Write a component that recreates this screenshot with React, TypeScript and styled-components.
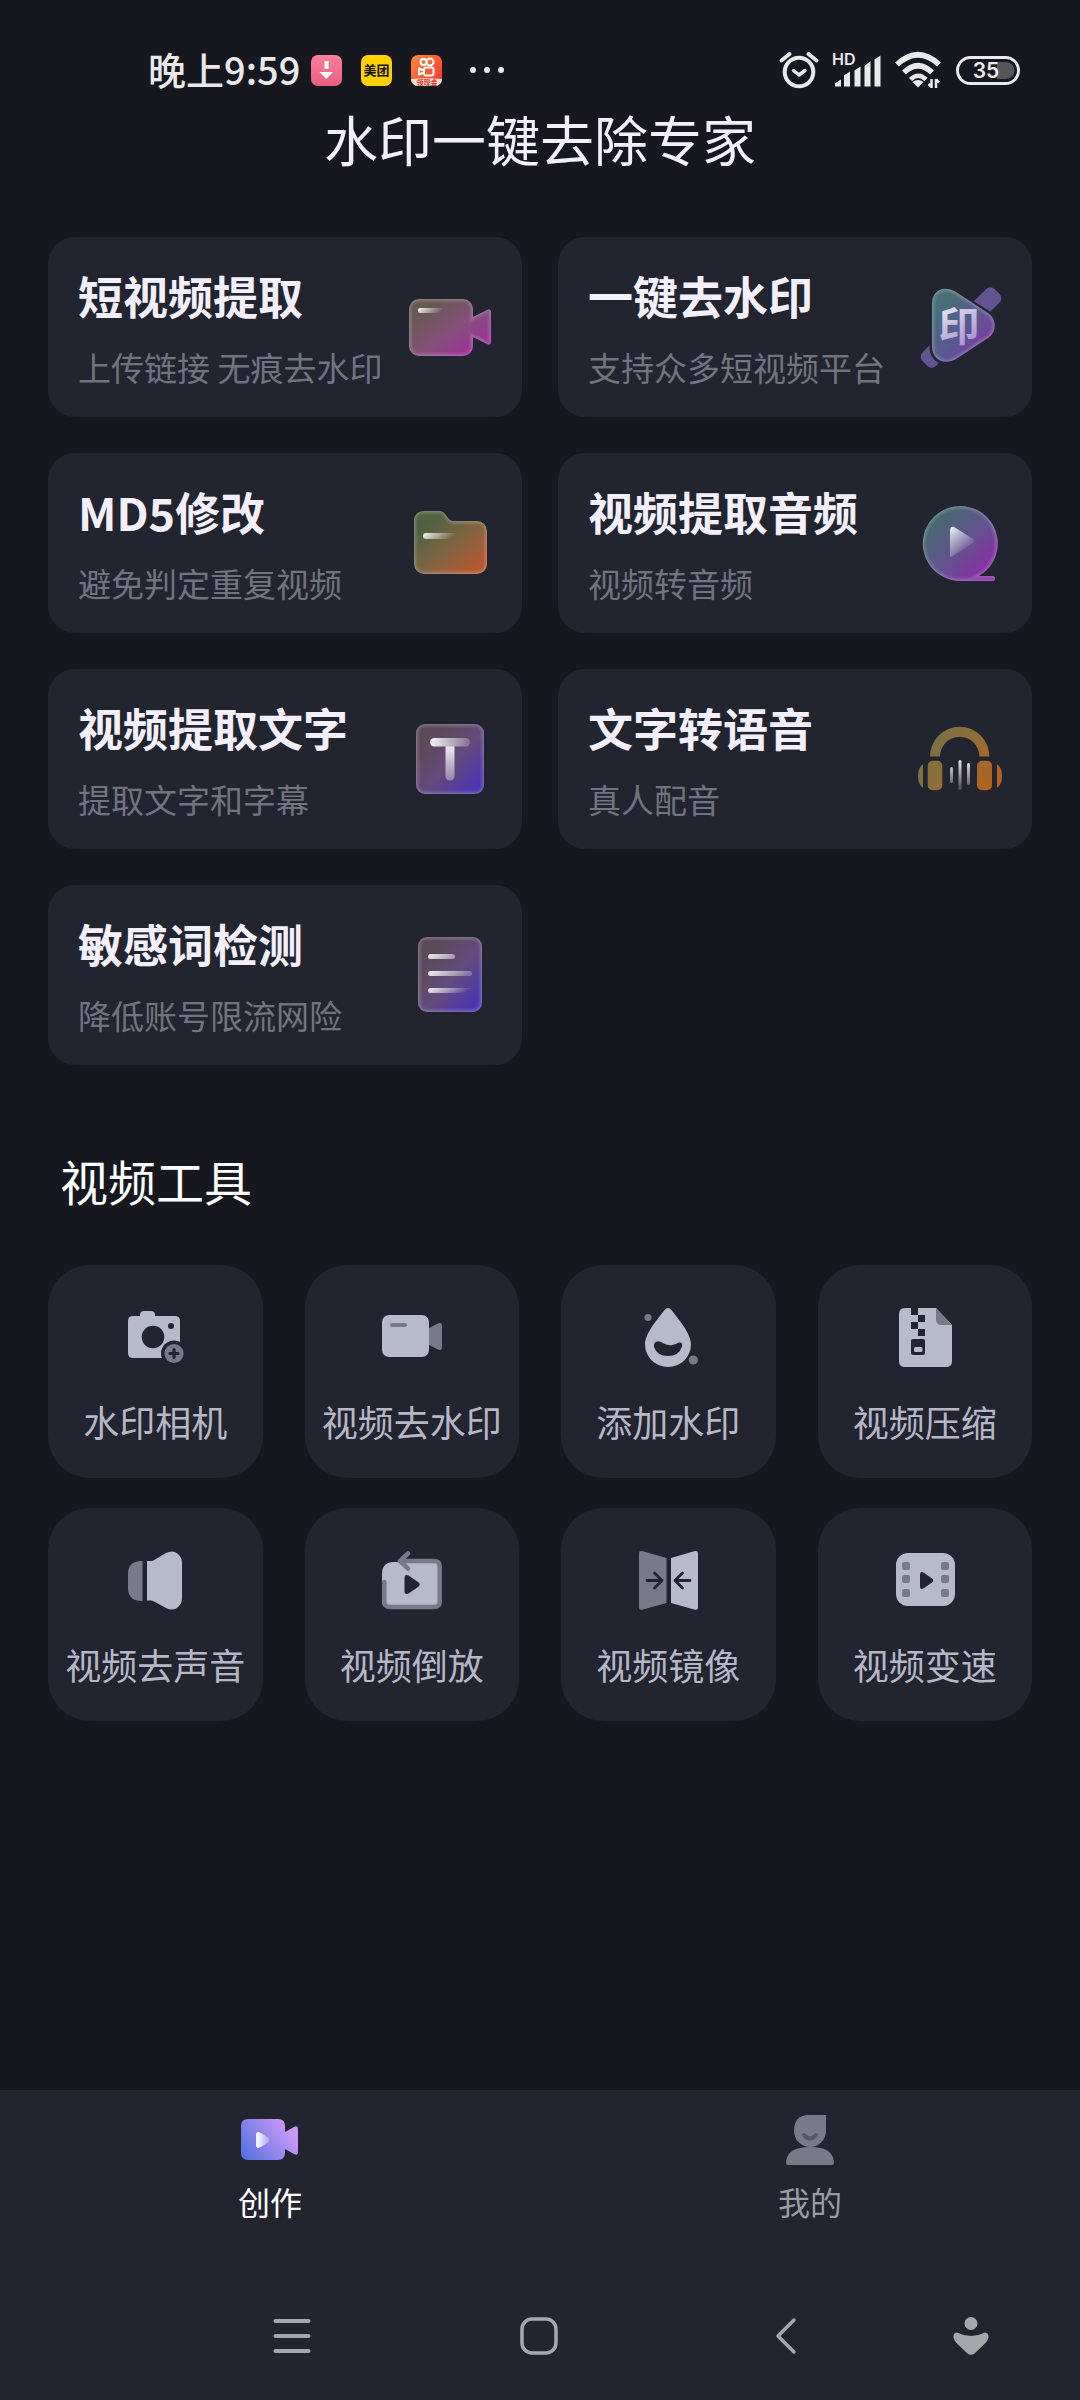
import React from "react";
import styled, { createGlobalStyle } from "styled-components";

const color = {
  page: "#17181f",
  panel: "#222430",
  heading: "#f3effb",
  subtle: "#71747f",
  label: "#b5b7c7",
  light: "#b6bac9",
  mid: "#787a88",
  status: "#e9e9ec",
  system: "#a6a7ad",
};

const GlobalStyle = createGlobalStyle`
  * { box-sizing: border-box; }
  body {
    margin: 0;
    background: ${color.page};
    font-family: "Noto Sans CJK SC", "Noto Sans", sans-serif;
  }
  button { border: 0; padding: 0; margin: 0; background: none; font: inherit; color: inherit; cursor: pointer; }
  h1, h2, h3, p { margin: 0; }
  svg { display: block; flex: none; overflow: visible; }
`;

const Page = styled.div`
  min-height: 100vh;
  display: flex;
  flex-direction: column;
  background: ${color.page};
`;

const StatusBar = styled.header`
  display: flex;
  justify-content: space-between;
  align-items: center;
  padding: 44px 60px 0 148px;
  height: 96px;
  color: ${color.status};
`;

const StatusGroup = styled.div<{ $gap: number }>`
  display: flex;
  align-items: center;
  gap: ${(p) => p.$gap}px;
`;

const Notifications = styled.div`
  display: flex;
  align-items: center;
  gap: 19px;
  padding-right: 16px;
`;

const Clock = styled.time`
  padding-bottom: 2px;
  font-size: 38px;
  line-height: 48px;
  font-weight: 500;
`;

const PageTitle = styled.h1`
  font-size: 54px;
  line-height: 86px;
  font-weight: 400;
  text-align: center;
  color: ${color.heading};
`;

const Main = styled.main`
  flex: 1;
  padding: 55px 48px 48px;
`;

const FeatureGrid = styled.section`
  display: grid;
  grid-template-columns: 1fr 1fr;
  gap: 36px;
`;

const FeatureCard = styled.button`
  display: flex;
  align-items: center;
  justify-content: space-between;
  height: 180px;
  padding: 0 27px 0 30px;
  border-radius: 27px;
  background: ${color.panel};
  text-align: left;
`;

const FeatureText = styled.span`
  display: flex;
  flex-direction: column;
  gap: 15px;
`;

const FeatureTitle = styled.span`
  font-size: 45px;
  line-height: 64px;
  font-weight: 700;
  color: ${color.heading};
`;

const FeatureHint = styled.span`
  font-size: 33px;
  line-height: 48px;
  white-space: nowrap;
  color: ${color.subtle};
`;

const SectionTitle = styled.h2`
  margin: 81px 0 51px;
  padding-left: 12px;
  font-size: 48px;
  line-height: 68px;
  font-weight: 400;
  color: #fff;
`;

const ToolGrid = styled.section`
  display: grid;
  grid-template-columns: repeat(4, 1fr);
  gap: 30px 42px;
`;

const ToolCard = styled.button`
  display: flex;
  flex-direction: column;
  align-items: center;
  gap: 29px;
  padding: 43px 0 33px;
  border-radius: 42px;
  background: ${color.panel};
`;

const ToolLabel = styled.span`
  font-size: 36px;
  line-height: 48px;
  white-space: nowrap;
  color: ${color.label};
`;

const Bottom = styled.footer`
  background: ${color.panel};
`;

const TabBar = styled.nav`
  display: grid;
  grid-template-columns: 1fr 1fr;
`;

const Tab = styled.button<{ $active?: boolean }>`
  display: flex;
  flex-direction: column;
  align-items: center;
  gap: 11px;
  padding: 20px 0 51px;
  font-size: 32px;
  line-height: 40px;
  color: ${(p) => (p.$active ? "#ffffff" : "#9a9ba3")};
`;

const SystemBar = styled.div`
  display: grid;
  grid-template-columns: 2fr 2fr 2fr 1fr;
  padding: 0 47px 0 169px;
  height: 128px;
`;

const SystemButton = styled.button`
  display: flex;
  align-items: center;
  justify-content: center;
`;

/* ---------- status bar drawings ---------- */

const DownloadBadge = () => (
  <svg width="31" height="31" viewBox="0 0 31 31" aria-hidden="true">
    <defs>
      <linearGradient id="dl" x1="0" y1="0" x2="0" y2="1">
        <stop offset="0" stopColor="#fb7f9c" />
        <stop offset="1" stopColor="#e85f80" />
      </linearGradient>
    </defs>
    <rect width="31" height="31" rx="7" fill="url(#dl)" />
    <path d="M13.5 6h4v8h-4zM8.500 17h13.500l-6.700 7z" fill="#fff" />
  </svg>
);

const MeituanBadge = () => (
  <svg width="31" height="31" viewBox="0 0 31 31" aria-hidden="true">
    <rect width="31" height="31" rx="7" fill="#ffd100" />
    <text x="15.500" y="20" fontSize="13" fontWeight="700" textAnchor="middle" fill="#17130a">美团</text>
  </svg>
);

const KuaishouBadge = () => (
  <svg width="31" height="31" viewBox="0 0 31 31" aria-hidden="true">
    <defs>
      <linearGradient id="ks" x1="0" y1="0" x2="1" y2="1">
        <stop offset="0" stopColor="#ff8a3a" />
        <stop offset="1" stopColor="#ff3030" />
      </linearGradient>
      <clipPath id="ksclip"><rect width="31" height="31" rx="7" /></clipPath>
    </defs>
    <g clipPath="url(#ksclip)">
      <rect width="31" height="31" fill="url(#ks)" />
      <g fill="none" stroke="#fff" strokeWidth="2">
        <circle cx="12.500" cy="7" r="3" />
        <circle cx="19" cy="7" r="3.500" />
        <rect x="13" y="12.500" width="9.500" height="8" rx="2" />
        <path d="M13 15.500l-5-2v6l5-2z" />
      </g>
      <path d="M0 24q15-1.500 31 0v7H0z" fill="#f6e3cf" />
      <text x="16" y="30" fontSize="7" fontWeight="700" textAnchor="middle" fill="#d8332c">领现金</text>
    </g>
  </svg>
);

const MoreDots = () => (
  <svg width="36" height="8" viewBox="0 0 36 8" aria-hidden="true" fill={color.status}>
    <circle cx="4" cy="4" r="3" />
    <circle cx="18" cy="4" r="3" />
    <circle cx="32" cy="4" r="3" />
  </svg>
);

const AlarmIcon = () => (
  <svg width="40" height="38" viewBox="0 0 40 38" aria-label="闹钟" fill="none" stroke={color.status} strokeLinecap="round" strokeLinejoin="round">
    <circle cx="20" cy="21" r="14.300" strokeWidth="4" />
    <path d="M14.500 19.500l5.500 4.500 6-4.500" strokeWidth="3.500" />
    <path d="M2.500 9.500l8-6.500M37.500 9.500l-8-6.500" strokeWidth="4" />
  </svg>
);

const SignalIcon = () => (
  <svg width="50" height="44" viewBox="0 -4 50 44" aria-label="信号" fill={color.status}>
    <text x="0" y="13" fontSize="16" fontWeight="600" fontFamily="Inter, sans-serif" fill={color.status}>HD</text>
    <path d="M3 34.500v-3q4-3 6-4v7q0 0-1 0H3zM12 23.500l6-4v15h-6zM22.500 18.500l6-4v20h-6zM32.500 14l6-5v25.500h-6zM42.500 7.500l6-4v31h-6z" />
  </svg>
);

const WifiIcon = () => (
  <svg width="48" height="38" viewBox="0 0 48 38" aria-label="无线网络" fill="none" stroke={color.status} strokeWidth="5.500">
    <path d="M2 13.500Q23 -6 44 13.500" />
    <path d="M9 21.500Q23 8 37 21.500" />
    <path d="M15.500 28.500Q23 21 31 28.500" strokeWidth="4.500" />
    <path d="M17.500 31q5.500-4 11 0L23 36.500z" fill={color.status} stroke="none" />
    <path d="M36.500 28v9M33.500 33l3 3M41 37v-9M44 31.500l-3-3" strokeWidth="2.500" />
  </svg>
);

const BatteryIcon = () => (
  <svg width="64" height="29" viewBox="0 0 64 29" aria-label="电量 35">
    <rect x="1.500" y="1.500" width="61" height="26" rx="13" fill="none" stroke={color.status} strokeWidth="3" />
    <path d="M41 6h9a8.500 8.500 0 0 1 0 17h-9z" fill="#55555c" />
    <text x="30" y="22" fontSize="21" fontWeight="600" fontFamily="Inter, sans-serif" textAnchor="middle" fill={color.status}>35</text>
  </svg>
);

/* ---------- feature drawings, 90 x 90 ---------- */

type GradProps = { id: string; from: string; via?: string; to: string };

const Grad = ({ id, from, via, to }: GradProps) => (
  <linearGradient id={id} x1="0.05" y1="0.05" x2="0.95" y2="0.95">
    <stop offset="0.150" stopColor={from} />
    {via && <stop offset="0.550" stopColor={via} />}
    <stop offset="0.920" stopColor={to} />
  </linearGradient>
);

const Shine = ({ id, end = 0 }: { id: string; end?: number }) => (
  <linearGradient id={id} x1="0" y1="0" x2="1" y2="0.2">
    <stop offset="0.050" stopColor="#fff" stopOpacity="0.900" />
    <stop offset="1" stopColor="#fff" stopOpacity={end} />
  </linearGradient>
);

/* Fills a glass shape and lays a soft bright rim just inside its edge. */
const Glass = ({ id, d }: { id: string; d: string }) => (
  <>
    <clipPath id={`${id}-clip`}><path d={d} /></clipPath>
    <path d={d} fill={`url(#${id})`} />
    <g clipPath={`url(#${id}-clip)`} fill="none" stroke="#fff">
      <path d={d} strokeOpacity="0.050" strokeWidth="8" />
      <path d={d} strokeOpacity="0.080" strokeWidth="5" />
      <path d={d} strokeOpacity="0.100" strokeWidth="2.500" />
    </g>
  </>
);

const Art = ({ children }: { children: React.ReactNode }) => (
  <svg width="90" height="90" viewBox="0 0 90 90" aria-hidden="true">{children}</svg>
);

const CameraArt = () => (
  <Art>
    <defs>
      <Grad id="cam" from="#675853" via="#84507a" to="#9f2c9a" />
      <Shine id="camS" />
    </defs>
    <Glass id="cam" d="M14 17H58a10 10 0 0 1 10 10V35L82 28Q86 26 86 30V60Q86 64 82 62L68 55V64a10 10 0 0 1-10 10H14a10 10 0 0 1-10-10V27a10 10 0 0 1 10-10z" />
    <rect x="13" y="26" width="26" height="5" rx="2" fill="url(#camS)" />
  </Art>
);

const StampArt = () => (
  <Art>
    <defs>
      <Grad id="stamp" from="#467076" via="#5a5791" to="#8434a5" />
      <linearGradient id="stampT" x1="0" y1="0" x2="0.400" y2="1">
        <stop offset="0.200" stopColor="#e6e9f2" />
        <stop offset="1" stopColor="#a98fce" />
      </linearGradient>
    </defs>
    <rect x="-5" y="36" width="102" height="19" rx="6" transform="rotate(-45 46 45.500)" fill="#625491" />
    <path d="M17 22C17 7 30 3 41 11L73 31C83 38 83 50 73 57L41 77C29 85 17 77 17 65z" fill={color.panel} stroke={color.panel} strokeWidth="5" />
    <Glass id="stamp" d="M17 22C17 8 29 3 41 10L73 31C82 37 82 50 73 56L41 77C29 84 17 77 17 65z" />
    <text x="44" y="59" fontSize="41" fontWeight="700" textAnchor="middle" fill="url(#stampT)">印</text>
  </Art>
);

const FolderArt = () => (
  <Art>
    <defs>
      <Grad id="fold" from="#4f6141" via="#806542" to="#b45830" />
      <Shine id="foldS" />
    </defs>
    <Glass id="fold" d="M18 13H34Q38 13 40 16L44 21Q45.500 23 48 23H72a10 10 0 0 1 10 10V66a10 10 0 0 1-10 10H19a10 10 0 0 1-10-10V22a9 9 0 0 1 9-9z" />
    <rect x="18" y="35" width="33" height="6" rx="3" fill="url(#foldS)" />
  </Art>
);

const DiscArt = () => (
  <Art>
    <defs>
      <Grad id="disc" from="#456970" via="#64518f" to="#8e2ca8" />
      <linearGradient id="discS" x1="0" y1="0" x2="0.700" y2="1">
        <stop offset="0" stopColor="#fff" stopOpacity="0.900" />
        <stop offset="0.850" stopColor="#fff" stopOpacity="0.050" />
      </linearGradient>
    </defs>
    <Glass id="disc" d="M45.500 83A37.500 37.500 0 1 1 64 78H78Q80 78 80 80.500T78 83z" />
    <path d="M35 33Q35 27 40 29.500L58 41Q61 43 58 45L36 59Q35 60 35 58z" fill="url(#discS)" />
  </Art>
);

const TextArt = () => (
  <Art>
    <defs>
      <Grad id="txt" from="#5b4a57" via="#634b7c" to="#4d35ae" />
      <linearGradient id="txtH" x1="0" y1="0" x2="1" y2="0">
        <stop offset="0.100" stopColor="#ece7ee" />
        <stop offset="1" stopColor="#83718f" />
      </linearGradient>
      <linearGradient id="txtV" x1="0" y1="0" x2="0" y2="1">
        <stop offset="0.100" stopColor="#e5dfe8" />
        <stop offset="1" stopColor="#9684a8" />
      </linearGradient>
    </defs>
    <Glass id="txt" d="M20 10H70a9 9 0 0 1 9 9V71a9 9 0 0 1-9 9H20a9 9 0 0 1-9-9V19a9 9 0 0 1 9-9z" />
    <path d="M40.500 32h9v30a4.500 4.500 0 0 1-9 0z" fill="url(#txtV)" />
    <rect x="25" y="24" width="40" height="8.500" rx="4.200" fill="url(#txtH)" />
  </Art>
);

const HeadphoneArt = () => (
  <Art>
    <defs>
      <linearGradient id="hp" gradientUnits="userSpaceOnUse" x1="10" y1="20" x2="80" y2="70">
        <stop offset="0" stopColor="#767145" />
        <stop offset="0.500" stopColor="#916d38" />
        <stop offset="1" stopColor="#b4621c" />
      </linearGradient>
      <linearGradient id="hpS" gradientUnits="userSpaceOnUse" x1="0" y1="46" x2="0" y2="76">
        <stop offset="0" stopColor="#e4e4ea" />
        <stop offset="1" stopColor="#4b4c59" />
      </linearGradient>
    </defs>
    <g fill="url(#hp)">
      <path d="M15 42.500a29.700 29.700 0 0 1 59.400 0h-10a19.700 19.700 0 0 0-39.400 0z" />
      <rect x="12.700" y="46.700" width="14.600" height="29.500" rx="5" />
      <rect x="62" y="46.700" width="15" height="29.500" rx="5" />
      <path d="M8 50V74Q3 70 3 62T8 50zM82 50V74Q87 70 87 62T82 50z" />
    </g>
    <g fill="url(#hpS)">
      <rect x="35" y="53" width="3" height="16" rx="1.500" />
      <rect x="43.500" y="46" width="3" height="30" rx="1.500" />
      <rect x="52" y="49" width="3" height="22" rx="1.500" />
    </g>
  </Art>
);

const DocumentArt = () => (
  <Art>
    <defs>
      <Grad id="doc" from="#5b4a57" via="#634b7c" to="#4d35ae" />
      <Shine id="docA" end={0.450} />
      <Shine id="docB" end={0.250} />
      <Shine id="docC" />
    </defs>
    <Glass id="doc" d="M22 7H68a9 9 0 0 1 9 9V73a9 9 0 0 1-9 9H22a9 9 0 0 1-9-9V16a9 9 0 0 1 9-9z" />
    <rect x="23" y="24" width="27" height="5" rx="2.500" fill="url(#docA)" />
    <rect x="23" y="41" width="44" height="5" rx="2.500" fill="url(#docB)" />
    <rect x="23" y="58" width="44" height="5" rx="2.500" fill="url(#docC)" />
  </Art>
);

/* ---------- tool drawings, 60 x 60 ---------- */

const Glyph = ({ children }: { children: React.ReactNode }) => (
  <svg width="60" height="60" viewBox="0 0 60 60" aria-hidden="true" fill={color.light}>{children}</svg>
);

const PhotoGlyph = () => (
  <Glyph>
    <path d="M8 8h7V7q0-4 4-4h7q4 0 4 4v1h20q5 0 5 5v32q0 5-5 5H8q-5 0-5-5V13q0-5 5-5z" />
    <circle cx="28" cy="29" r="11.300" fill={color.panel} />
    <circle cx="46" cy="18" r="3" fill={color.panel} />
    <circle cx="49" cy="45.500" r="13" fill={color.panel} />
    <circle cx="49" cy="45.500" r="9.600" fill={color.mid} />
    <path d="M49 41.500v8M45 45.500h8" stroke={color.panel} strokeWidth="3.200" strokeLinecap="round" />
  </Glyph>
);

const CamcorderGlyph = () => (
  <Glyph>
    <rect x="0" y="7" width="47" height="42" rx="7" />
    <path d="M47 20l9-4.500q4-1.500 4 2.500v21q0 4-4 2.500L47 37z" fill={color.mid} />
    <rect x="8" y="15" width="17" height="4" rx="2" fill={color.mid} />
  </Glyph>
);

const DropGlyph = () => (
  <Glyph>
    <path d="M26.500 2Q30-2 33.500 2C40 11 53 25 53 36.500a23 22.500 0 0 1-46 0C7 25 20 11 26.500 2z" />
    <path d="M16 36q2-4 7-2 7 4 11 3 4-1 7-2.500 4-.5 3 4Q41 48 30 48T16 39z" fill={color.panel} />
    <circle cx="10" cy="9.500" r="3.600" fill={color.mid} />
    <circle cx="55.300" cy="52" r="4.600" fill={color.mid} />
  </Glyph>
);

const ZipGlyph = () => (
  <Glyph>
    <path d="M10 0h31l16 17v36q0 6-6 6H10q-6 0-6-6V6q0-6 6-6z" />
    <path d="M41 0l16 17H47q-6 0-6-6z" fill={color.mid} />
    <path d="M16 0h7v7h-7zM23 7h7v7h-7zM16 14h7v7h-7zM23 21h7v7h-7z" fill={color.panel} />
    <rect x="16" y="31" width="14" height="16" rx="2" fill={color.panel} />
    <rect x="19" y="39" width="8.500" height="5" rx="1.500" />
  </Glyph>
);

const SpeakerGlyph = () => (
  <Glyph>
    <path d="M17.500 10v40H15Q3 49 3 37V23Q3 11 15 10z" fill={color.mid} />
    <path d="M22 10h4q2 0 4-1.500L41 2Q49-2 54 4q3 3 3 8v35q0 5-3 8-5 6-13 2L30 51q-2-1.500-4-1.500h-4z" />
  </Glyph>
);

const ReverseGlyph = () => (
  <Glyph>
    <path d="M0 23Q0 11 12 11h42q4 0 4 4v37q0 4-4 4H5q-5 0-5-5z" />
    <g fill="none" stroke={color.mid} strokeWidth="4.500" strokeLinecap="round" strokeLinejoin="round">
      <path d="M18 10h34q5.700 0 5.700 5.700v34.600q0 5.700-5.700 5.700H8q-5.700 0-5.700-5.700V31" />
      <path d="M26 2.500L18 10l8 7.500" />
    </g>
    <path d="M22.500 27q0-4 4-2.500L36 31q3.500 2.500 0 5l-9.500 6.500q-4 1.500-4-2.500z" fill={color.panel} />
  </Glyph>
);

const MirrorGlyph = () => (
  <Glyph>
    <path d="M1 2q0-2.500 3-2L28.500 7v45L4 58.700q-3 .5-3-2z" fill={color.mid} />
    <path d="M60 2q0-2.500-3-2L33 7v45l24 6.700q3 .5 3-2z" />
    <g fill="none" stroke={color.panel} strokeWidth="2.800" strokeLinecap="round" strokeLinejoin="round">
      <path d="M9 29.500h15M16.500 22l7.500 7.500-7.500 7.500" />
      <path d="M52 29.500H37M44.500 22L37 29.500l7.500 7.500" />
    </g>
  </Glyph>
);

const SpeedGlyph = () => (
  <Glyph>
    <rect x="1" y="2" width="59" height="53" rx="12" />
    {[11, 24, 38].map((y) => (
      <g key={y} fill={color.mid}>
        <rect x="7" y={y} width="8" height="8" rx="2" />
        <rect x="46" y={y} width="8" height="8" rx="2" />
      </g>
    ))}
    <path d="M25 24q0-4 3.500-2.500L37 27.500q2.500 2 0 4L28.500 37.500Q25 39 25 35z" fill={color.panel} />
  </Glyph>
);

/* ---------- bottom drawings ---------- */

const CreateTabIcon = () => (
  <svg width="60" height="60" viewBox="0 0 60 60" aria-hidden="true">
    <defs>
      <linearGradient id="tab" x1="0" y1="0.800" x2="1" y2="0.300">
        <stop offset="0" stopColor="#5474e2" />
        <stop offset="0.900" stopColor="#cb97f6" />
      </linearGradient>
      <linearGradient id="tabP" x1="0" y1="0" x2="1" y2="0">
        <stop offset="0.200" stopColor="#fff" stopOpacity="0.900" />
        <stop offset="1" stopColor="#fff" stopOpacity="0.200" />
      </linearGradient>
    </defs>
    <path d="M8 9h30q7 0 7 7v6l9-5q4-2 4 2v23q0 4-4 2l-9-5v4q0 7-7 7H8q-7 0-7-7V16q0-7 7-7z" fill="url(#tab)" />
    <path d="M16 25q0-4 4-2.500l8 5q3.500 2.500 0 5l-8 5q-4 1.500-4-2.500z" fill="url(#tabP)" />
  </svg>
);

const ProfileTabIcon = () => (
  <svg width="60" height="60" viewBox="0 0 60 60" aria-hidden="true" fill={color.mid}>
    <path d="M29 5h17v16q0 7-5 11.500-5 4.500-11 4.500t-11-4.500Q14 28 14 21 14 5 29 5z" />
    <path d="M24 25q6 7 12 0" fill="none" stroke="#555763" strokeWidth="4" strokeLinecap="round" />
    <path d="M6 52Q7 37 30 37t24 15q0 3-2 3H8q-2 0-2-3z" />
  </svg>
);

const RecentsIcon = () => (
  <svg width="38" height="38" viewBox="0 0 38 38" aria-hidden="true" stroke={color.system} strokeWidth="4" strokeLinecap="round">
    <path d="M2.500 4h33M2.500 19h33M2.500 34h33" />
  </svg>
);

const HomeIcon = () => (
  <svg width="38" height="38" viewBox="0 0 38 38" aria-hidden="true" fill="none" stroke={color.system} strokeWidth="3.500">
    <rect x="2" y="2" width="34" height="34" rx="10" />
  </svg>
);

const BackIcon = () => (
  <svg width="22" height="38" viewBox="0 0 22 38" aria-hidden="true" fill="none" stroke={color.system} strokeWidth="3.500" strokeLinecap="round" strokeLinejoin="round">
    <path d="M19 3L3 19l16 16" />
  </svg>
);

const AssistIcon = () => (
  <svg width="36" height="38" viewBox="0 0 36 38" aria-hidden="true" fill={color.system}>
    <circle cx="18" cy="6.500" r="6.500" />
    <path d="M4 15.500Q11 19 18 19T32 15.500Q36 16 35.500 20.500Q35 24 31 27.500L21.500 36.500Q18 39 14.500 36.500L5 27.500Q1 24 .5 20.500Q0 16 4 15.500z" />
  </svg>
);

const features = [
  { title: "短视频提取", hint: "上传链接 无痕去水印", Icon: CameraArt },
  { title: "一键去水印", hint: "支持众多短视频平台", Icon: StampArt },
  { title: "MD5修改", hint: "避免判定重复视频", Icon: FolderArt },
  { title: "视频提取音频", hint: "视频转音频", Icon: DiscArt },
  { title: "视频提取文字", hint: "提取文字和字幕", Icon: TextArt },
  { title: "文字转语音", hint: "真人配音", Icon: HeadphoneArt },
  { title: "敏感词检测", hint: "降低账号限流网险", Icon: DocumentArt },
];

const tools = [
  { label: "水印相机", Icon: PhotoGlyph },
  { label: "视频去水印", Icon: CamcorderGlyph },
  { label: "添加水印", Icon: DropGlyph },
  { label: "视频压缩", Icon: ZipGlyph },
  { label: "视频去声音", Icon: SpeakerGlyph },
  { label: "视频倒放", Icon: ReverseGlyph },
  { label: "视频镜像", Icon: MirrorGlyph },
  { label: "视频变速", Icon: SpeedGlyph },
];

export default function App() {
  return (
    <Page>
      <GlobalStyle />
      <StatusBar>
        <StatusGroup $gap={11}>
          <Clock>晚上9:59</Clock>
          <Notifications>
            <DownloadBadge />
            <MeituanBadge />
            <KuaishouBadge />
          </Notifications>
          <MoreDots />
        </StatusGroup>
        <StatusGroup $gap={13}>
          <AlarmIcon />
          <SignalIcon />
          <WifiIcon />
          <BatteryIcon />
        </StatusGroup>
      </StatusBar>
      <PageTitle>水印一键去除专家</PageTitle>
      <Main>
        <FeatureGrid>
          {features.map(({ title, hint, Icon }) => (
            <FeatureCard key={title} type="button">
              <FeatureText>
                <FeatureTitle>{title}</FeatureTitle>
                <FeatureHint>{hint}</FeatureHint>
              </FeatureText>
              <Icon />
            </FeatureCard>
          ))}
        </FeatureGrid>
        <SectionTitle>视频工具</SectionTitle>
        <ToolGrid>
          {tools.map(({ label, Icon }) => (
            <ToolCard key={label} type="button">
              <Icon />
              <ToolLabel>{label}</ToolLabel>
            </ToolCard>
          ))}
        </ToolGrid>
      </Main>
      <Bottom>
        <TabBar>
          <Tab type="button" $active aria-current="page">
            <CreateTabIcon />
            创作
          </Tab>
          <Tab type="button">
            <ProfileTabIcon />
            我的
          </Tab>
        </TabBar>
        <SystemBar>
          <SystemButton type="button" aria-label="最近任务"><RecentsIcon /></SystemButton>
          <SystemButton type="button" aria-label="主屏幕"><HomeIcon /></SystemButton>
          <SystemButton type="button" aria-label="返回"><BackIcon /></SystemButton>
          <SystemButton type="button" aria-label="悬浮助手"><AssistIcon /></SystemButton>
        </SystemBar>
      </Bottom>
    </Page>
  );
}
